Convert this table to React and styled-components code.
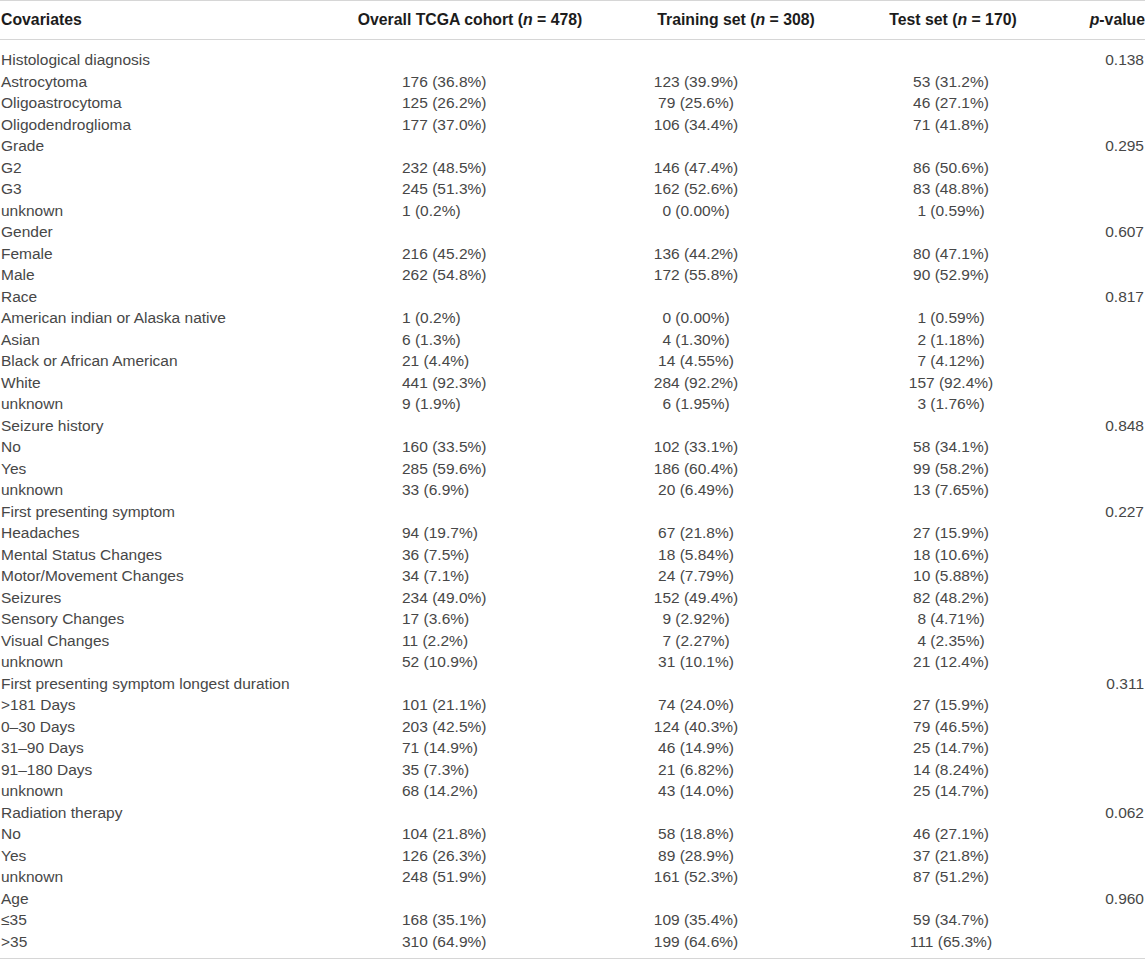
import React from 'react';
import styled, { createGlobalStyle } from 'styled-components';

const Global = createGlobalStyle`
  html, body { margin: 0; padding: 0; background: #ffffff; }
  body { font-family: "Liberation Sans", Arial, Helvetica, sans-serif; }
`;

const Table = styled.table`
  width: 1145px;
  border-collapse: collapse;
  table-layout: fixed;
  font-size: 15.5px;
  color: #474747;
  border-top: 1px solid #d6d6d6;
  border-bottom: 1px solid #d6d6d6;
`;

const HeadCell = styled.th`
  height: 38px;
  padding: 0 ${(p) => p.$pr || 0}px 0 ${(p) => p.$pl || 0}px;
  font-size: 15.8px;
  font-weight: bold;
  color: #1c1c1c;
  text-align: ${(p) => p.$align || 'center'};
  border-bottom: 1px solid #d6d6d6;
  white-space: nowrap;
`;

const Cell = styled.td`
  height: 21.5px;
  line-height: 21.5px;
  padding: ${(p) => (p.$first ? 9 : 0)}px ${(p) => p.$pr || 0}px ${(p) => (p.$last ? 6 : 0)}px ${(p) => p.$pl || 0}px;
  text-align: ${(p) => p.$align || 'left'};
  white-space: nowrap;
  vertical-align: bottom;
`;

const Em = styled.i`
  font-style: italic;
`;

const groups = [
  { label: 'Histological diagnosis', p: '0.138', rows: [
    ['Astrocytoma', '176 (36.8%)', '123 (39.9%)', '53 (31.2%)'],
    ['Oligoastrocytoma', '125 (26.2%)', '79 (25.6%)', '46 (27.1%)'],
    ['Oligodendroglioma', '177 (37.0%)', '106 (34.4%)', '71 (41.8%)'],
  ] },
  { label: 'Grade', p: '0.295', rows: [
    ['G2', '232 (48.5%)', '146 (47.4%)', '86 (50.6%)'],
    ['G3', '245 (51.3%)', '162 (52.6%)', '83 (48.8%)'],
    ['unknown', '1 (0.2%)', '0 (0.00%)', '1 (0.59%)'],
  ] },
  { label: 'Gender', p: '0.607', rows: [
    ['Female', '216 (45.2%)', '136 (44.2%)', '80 (47.1%)'],
    ['Male', '262 (54.8%)', '172 (55.8%)', '90 (52.9%)'],
  ] },
  { label: 'Race', p: '0.817', rows: [
    ['American indian or Alaska native', '1 (0.2%)', '0 (0.00%)', '1 (0.59%)'],
    ['Asian', '6 (1.3%)', '4 (1.30%)', '2 (1.18%)'],
    ['Black or African American', '21 (4.4%)', '14 (4.55%)', '7 (4.12%)'],
    ['White', '441 (92.3%)', '284 (92.2%)', '157 (92.4%)'],
    ['unknown', '9 (1.9%)', '6 (1.95%)', '3 (1.76%)'],
  ] },
  { label: 'Seizure history', p: '0.848', rows: [
    ['No', '160 (33.5%)', '102 (33.1%)', '58 (34.1%)'],
    ['Yes', '285 (59.6%)', '186 (60.4%)', '99 (58.2%)'],
    ['unknown', '33 (6.9%)', '20 (6.49%)', '13 (7.65%)'],
  ] },
  { label: 'First presenting symptom', p: '0.227', rows: [
    ['Headaches', '94 (19.7%)', '67 (21.8%)', '27 (15.9%)'],
    ['Mental Status Changes', '36 (7.5%)', '18 (5.84%)', '18 (10.6%)'],
    ['Motor/Movement Changes', '34 (7.1%)', '24 (7.79%)', '10 (5.88%)'],
    ['Seizures', '234 (49.0%)', '152 (49.4%)', '82 (48.2%)'],
    ['Sensory Changes', '17 (3.6%)', '9 (2.92%)', '8 (4.71%)'],
    ['Visual Changes', '11 (2.2%)', '7 (2.27%)', '4 (2.35%)'],
    ['unknown', '52 (10.9%)', '31 (10.1%)', '21 (12.4%)'],
  ] },
  { label: 'First presenting symptom longest duration', p: '0.311', rows: [
    ['>181 Days', '101 (21.1%)', '74 (24.0%)', '27 (15.9%)'],
    ['0–30 Days', '203 (42.5%)', '124 (40.3%)', '79 (46.5%)'],
    ['31–90 Days', '71 (14.9%)', '46 (14.9%)', '25 (14.7%)'],
    ['91–180 Days', '35 (7.3%)', '21 (6.82%)', '14 (8.24%)'],
    ['unknown', '68 (14.2%)', '43 (14.0%)', '25 (14.7%)'],
  ] },
  { label: 'Radiation therapy', p: '0.062', rows: [
    ['No', '104 (21.8%)', '58 (18.8%)', '46 (27.1%)'],
    ['Yes', '126 (26.3%)', '89 (28.9%)', '37 (21.8%)'],
    ['unknown', '248 (51.9%)', '161 (52.3%)', '87 (51.2%)'],
  ] },
  { label: 'Age', p: '0.960', rows: [
    ['≤35', '168 (35.1%)', '109 (35.4%)', '59 (34.7%)'],
    ['>35', '310 (64.9%)', '199 (64.6%)', '111 (65.3%)'],
  ] },
];

const flatRows = [];
groups.forEach((g) => {
  flatRows.push({ label: g.label, a: '', b: '', c: '', p: g.p });
  g.rows.forEach((r) => flatRows.push({ label: r[0], a: r[1], b: r[2], c: r[3], p: '' }));
});

export default function App() {
  return (
    <>
      <Global />
      <Table>
        <colgroup>
          <col style={{ width: 340 }} />
          <col style={{ width: 260 }} />
          <col style={{ width: 272 }} />
          <col style={{ width: 162 }} />
          <col style={{ width: 111 }} />
        </colgroup>
        <thead>
          <tr>
            <HeadCell $align="left" $pl={1}>Covariates</HeadCell>
            <HeadCell>Overall TCGA cohort (<Em>n</Em> = 478)</HeadCell>
            <HeadCell>Training set (<Em>n</Em> = 308)</HeadCell>
            <HeadCell>Test set (<Em>n</Em> = 170)</HeadCell>
            <HeadCell $align="right" $pr={0}><Em>p</Em>-value</HeadCell>
          </tr>
        </thead>
        <tbody>
          {flatRows.map((r, i) => {
            const first = i === 0;
            const last = i === flatRows.length - 1;
            return (
              <tr key={i}>
                <Cell $first={first} $last={last} $pl={1}>{r.label}</Cell>
                <Cell $first={first} $last={last} $pl={62}>{r.a}</Cell>
                <Cell $first={first} $last={last} $align="center" $pr={80}>{r.b}</Cell>
                <Cell $first={first} $last={last} $align="center" $pr={4}>{r.c}</Cell>
                <Cell $first={first} $last={last} $align="right" $pr={1}>{r.p}</Cell>
              </tr>
            );
          })}
        </tbody>
      </Table>
    </>
  );
}
